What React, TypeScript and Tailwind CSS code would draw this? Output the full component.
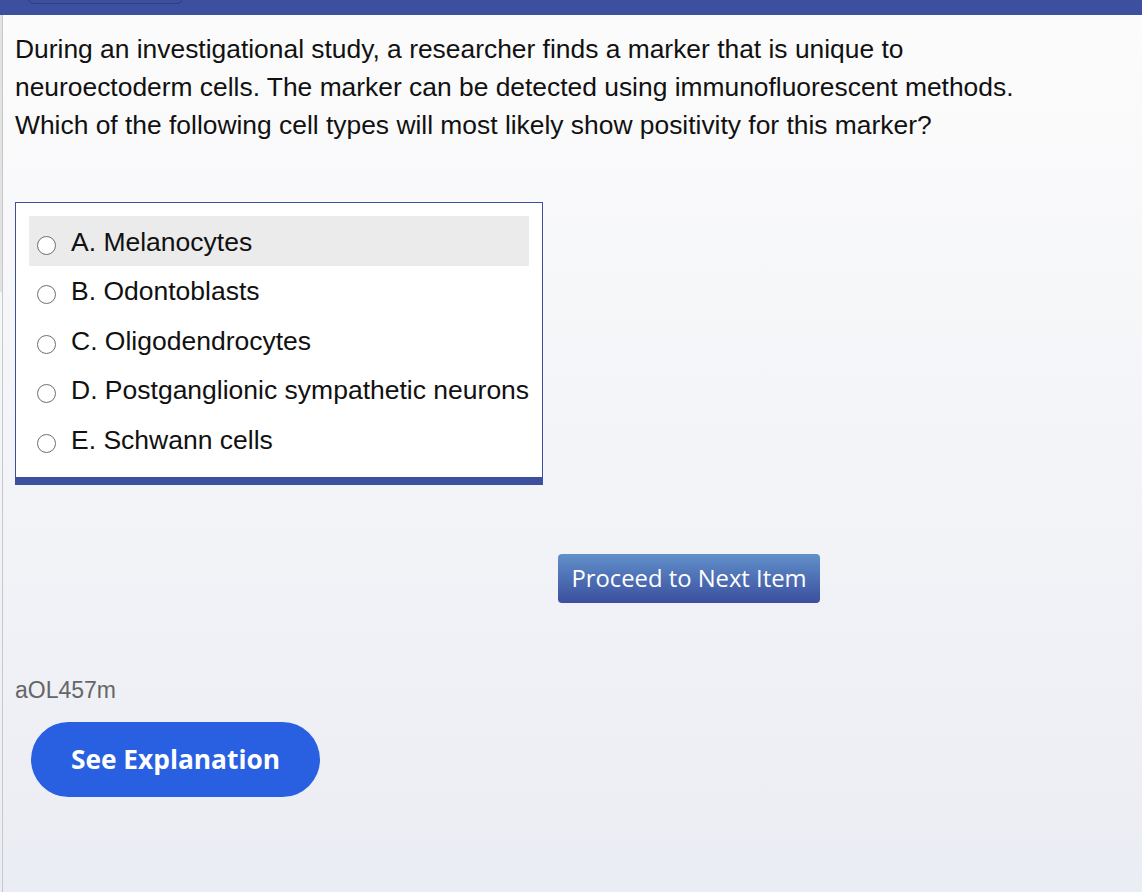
import React from "react";

const choices = [
  "A. Melanocytes",
  "B. Odontoblasts",
  "C. Oligodendrocytes",
  "D. Postganglionic sympathetic neurons",
  "E. Schwann cells",
];

export default function App() {
  return (
    <div className="w-[1142px] h-[892px] overflow-hidden flex flex-col bg-gradient-to-b from-[#fcfcfc] to-[#ebedf4]" style={{ fontFamily: '"Liberation Sans", Arial, sans-serif' }}>
      <div className="h-[15px] shrink-0 bg-[#3d4f9f] relative overflow-hidden">
        <div className="absolute left-[28px] top-[-20px] w-[155px] h-[24px] rounded-[6px] border border-[#2e3d80] text-white text-[14px] font-bold flex items-end justify-center leading-none pb-[2px]" style={{ fontFamily: '"Open Sans", sans-serif' }}>
          Block: 1 of 1
        </div>
      </div>
      <div className="flex flex-1 min-h-0">
        <div className="w-[3px] shrink-0 flex flex-col">
          <div className="h-[277px] bg-[#e2e2e2] border-r border-[#c8c8c8]"></div>
          <div className="flex-1 border-r border-[#c8c8c8]"></div>
        </div>
        <div className="flex-1 pl-[12px] flex flex-col">
          <p className="text-[26.4px] leading-[38px] text-[#111] mt-[15px] w-[1020px]">
            During an investigational study, a researcher finds a marker that is unique to neuroectoderm cells. The marker can be detected using immunofluorescent methods. Which of the following cell types will most likely show positivity for this marker?
          </p>
          <div className="mt-[58px] w-[528px] h-[283px] bg-white border border-[#3d4f9f] border-b-[8px] px-[13px] pt-[13px]">
            {choices.map((c, i) => (
              <div key={c} className={`h-[49.5px] flex items-center pl-[8px] ${i === 0 ? "bg-[#ebebeb]" : ""}`}>
                <span className="w-[19px] h-[19px] rounded-full border-[1.5px] border-[#6e6e6e] bg-white shrink-0 mt-[9px]"></span>
                <span className="ml-[15px] text-[26.5px] text-[#111] leading-none mt-[2px] whitespace-nowrap">{c}</span>
              </div>
            ))}
          </div>
          <div className="mt-[69px] ml-[543px]">
            <button className="w-[262px] h-[49px] rounded-[4px] bg-gradient-to-b from-[#6190ca] to-[#3c4f9e] text-white text-[23.8px] font-normal" style={{ fontFamily: '"Open Sans", sans-serif' }}>
              Proceed to Next Item
            </button>
          </div>
          <div className="mt-[76px] text-[23px] text-[#666] leading-none">aOL457m</div>
          <div className="mt-[20px] ml-[16px]">
            <button className="w-[289px] h-[75px] rounded-full bg-[#2860e1] text-white text-[26.3px] font-bold" style={{ fontFamily: '"Open Sans", sans-serif' }}>
              See Explanation
            </button>
          </div>
        </div>
      </div>
    </div>
  );
}
